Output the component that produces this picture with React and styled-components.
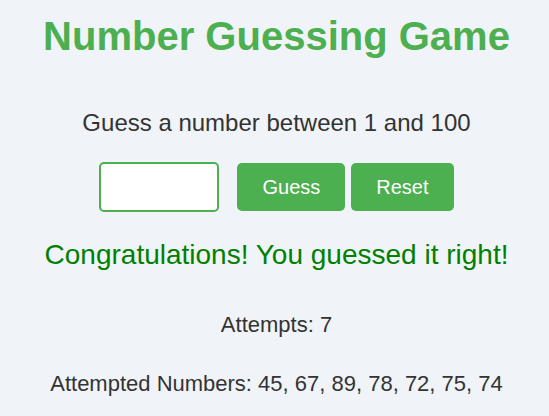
import React from "react";
import styled, { createGlobalStyle } from "styled-components";

const GlobalStyle = createGlobalStyle`
  body {
    margin: 0;
    background-color: #f0f4f8;
    font-family: Arial, "Liberation Sans", sans-serif;
    color: #333;
  }
`;

const Container = styled.div`
  text-align: center;
  padding: 14px 0 0 4px;
`;

const Title = styled.h1`
  margin: 0;
  font-size: 40px;
  color: #4caf50;
  font-weight: bold;
`;

const Prompt = styled.p`
  margin: 50px 0 0;
  font-size: 24px;
`;

const Controls = styled.div`
  display: flex;
  justify-content: center;
  align-items: center;
  margin-top: 25px;
`;

const Input = styled.input`
  width: 120px;
  height: 50px;
  box-sizing: border-box;
  border: 2px solid #4caf50;
  border-radius: 5px;
  background: #fff;
  margin-right: 18px;
  outline: none;
`;

const Button = styled.button`
  height: 48px;
  padding: 0 25px;
  margin-left: ${(p) => (p.$gap ? "6px" : "0")};
  border: none;
  border-radius: 5px;
  background-color: #4caf50;
  color: #fff;
  font-size: 20px;
  font-family: Arial, "Liberation Sans", sans-serif;
  cursor: pointer;
`;

const Message = styled.p`
  margin: 27px 0 0;
  font-size: 28px;
  color: #008000;
`;

const Info = styled.p`
  margin: ${(p) => p.$top} 0 0;
  font-size: 22px;
`;

const App = () => {
  return (
    <Container>
      <GlobalStyle />
      <Title>Number Guessing Game</Title>
      <Prompt>Guess a number between 1 and 100</Prompt>
      <Controls>
        <Input type="number" />
        <Button>Guess</Button>
        <Button $gap>Reset</Button>
      </Controls>
      <Message>Congratulations! You guessed it right!</Message>
      <Info $top="41px">Attempts: 7</Info>
      <Info $top="33px">Attempted Numbers: 45, 67, 89, 78, 72, 75, 74</Info>
    </Container>
  );
};

export default App;
